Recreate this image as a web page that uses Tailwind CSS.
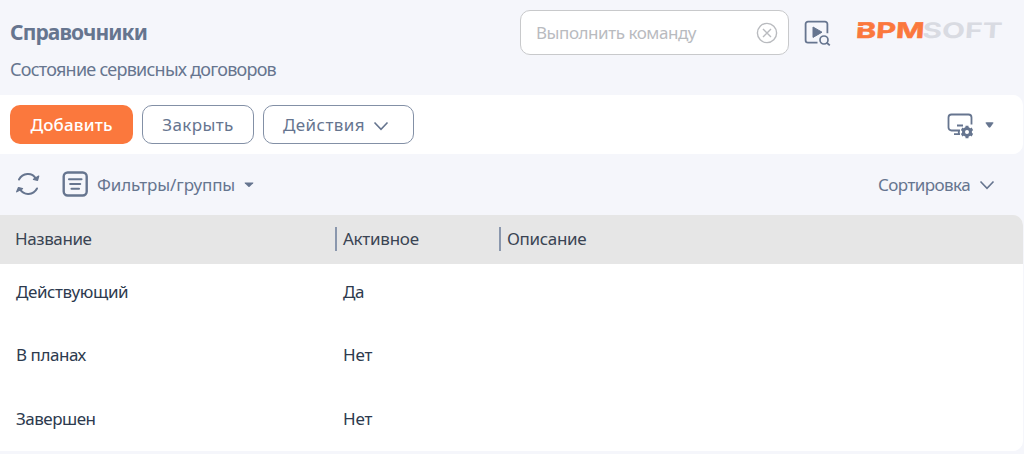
<!DOCTYPE html>
<html lang="ru">
<head>
<meta charset="utf-8">
<title>Справочники</title>
<script src="https://cdn.jsdelivr.net/npm/@tailwindcss/browser@4"></script>
</head>
<body class="h-[454px] w-[1024px] overflow-hidden bg-[#f5f6fb] font-['Noto_Sans',sans-serif] text-[17px] leading-6 whitespace-nowrap text-[#66758f]">
<header class="flex h-[95px] justify-between pl-[10px]">
  <div class="pt-[19px]">
    <h1 class="text-[21px] leading-[27px] font-bold tracking-[-0.9px]">Справочники</h1>
    <p class="mt-[11px] text-[18px] leading-[25px] tracking-[-0.76px]">Состояние сервисных договоров</p>
  </div>
  <div class="flex pt-[10px] pr-[12px]">
    <div class="flex h-[45px] w-[269px] items-center justify-between rounded-[10px] border border-[#c8c9cb] bg-white pr-[10px] pl-[15px] text-[#b9bbbf]">
      <span class="tracking-[-0.45px]">Выполнить команду</span>
      <svg class="size-[22px]" viewBox="0 0 22 22" fill="none" stroke="#b9bbbf" stroke-width="1.4"><circle cx="11" cy="11" r="9.6"/><path d="M7 7l8 8M15 7l-8 8"/></svg>
    </div>
    <svg class="mt-[9px] ml-[15px] h-[28px] w-[28px]" viewBox="0 0 28 28" fill="none" stroke="#66758f" stroke-width="1.8"><path d="M13.500 23.600H4a2.400 2.400 0 0 1-2.400-2.400V5A2.400 2.400 0 0 1 4 2.600h17a2.400 2.400 0 0 1 2.400 2.400v9.200"/><path d="M9 8v10.400L18 13.200Z" fill="#66758f" stroke-width="1" stroke-linejoin="round"/><circle cx="20" cy="21" r="4" stroke-width="1.700"/><path d="M22.800 23.800l3 2.600"/></svg>
    <svg class="mt-[4px] ml-[20px] h-[36px] w-[160px] overflow-visible" viewBox="-4 -5 160 36" font-family="Inter, sans-serif" font-size="21.500" font-weight="700">
      <g transform="translate(1 18.800) skewX(-4)">
      <text x="65" y="0" textLength="80" lengthAdjust="spacingAndGlyphs" fill="#d9dbe2">SOFT</text>
      <text x="-1.500" y="0" textLength="68.500" lengthAdjust="spacingAndGlyphs" fill="#fb783d" stroke="#fb783d" stroke-width=".5">BPM</text>
      </g>
      <path d="M0 7.600h8" stroke="#f5f6fb" stroke-width="1.200"/>
    </svg>
  </div>
</header>
<section class="flex h-[59px] w-[1023px] items-center rounded-r-[10px] bg-white pl-[10px]">
  <button class="h-[39px] w-[123px] rounded-[10px] bg-[#fb783d] font-medium tracking-[0.15px] text-white">Добавить</button>
  <button class="ml-[9px] h-[39px] w-[112px] rounded-[10px] border border-[#8390a6] tracking-[0.4px]">Закрыть</button>
  <button class="ml-[9px] flex h-[39px] w-[151px] items-center rounded-[10px] border border-[#8390a6] pl-[19px] tracking-[0.42px]">Действия
    <svg class="mt-[2px] ml-[8px] h-[10px] w-[16px]" viewBox="0 0 16 10" fill="none" stroke="#66758f" stroke-width="1.600"><path d="M1.500 1.500L8 8.300l6.500-6.800"/></svg>
  </button>
  <svg class="ml-[532px] h-[28px] w-[29px]" viewBox="0 0 29 28" fill="none" stroke="#66758f" stroke-width="1.800"><path d="M14 19.500H5.500a3 3 0 0 1-3-3V6.500a3 3 0 0 1 3-3h17a3 3 0 0 1 3 3v7M11 14.500h6M8 23.200h6M12.800 19.500v3.500"/><circle cx="21" cy="21" r="3.500" stroke-width="3"/><path d="M21 14.800v2.500m0 7.400v2.500M15.600 17.900l2.200 1.300m6.400 3.600l2.200 1.300M15.600 24.100l2.200-1.300m6.400-3.600l2.200-1.300" stroke-width="3"/></svg>
  <svg class="ml-[10px] h-[6px] w-[9px]" viewBox="0 0 9 6"><path d="M1.500 .2h6q1.600 0 .6 1.400L5.400 5.200q-.9.900-1.800 0L.9 1.600Q-.1.200 1.500.2Z" fill="#66758f"/></svg>
</section>
<section class="flex h-[61px] items-center pl-[15px]">
  <svg class="-mt-[1px] size-[26px]" viewBox="0 0 26 26" fill="none" stroke="#66758f" stroke-width="2" stroke-linecap="round"><path d="M4 8.500C7.500 1.800 17 .8 21 7.700M22 17.500C18.500 24.200 9 25 5 18.300"/><path d="M18.500 8.300l4 1 1.200-4.200ZM7.500 17.600l-4-1-1.800 4.200Z" fill="#66758f" stroke-width="1.300" stroke-linejoin="round"/></svg>
  <svg class="-mt-[1px] ml-[21px] size-[26px]" viewBox="0 0 26 26" fill="none" stroke="#66758f" stroke-width="2.400" stroke-linecap="round"><rect x="1.700" y="1.500" width="23" height="23" rx="4"/><path d="M7 8.200h12.500M8.200 13h10M9.500 17.800h7.500" stroke-width="2.100"/></svg>
  <span class="ml-[9px] tracking-[-0.1px]">Фильтры/группы</span>
  <svg class="ml-[9px] h-[6px] w-[10px]" viewBox="0 0 10 6"><path d="M1 .5h8q.8 0 .2.700L5.600 4.800q-.6.500-1.200 0L.8 1.200Q.2.500 1 .5Z" fill="#66758f"/></svg>
  <span class="ml-auto tracking-[-0.58px]">Сортировка</span>
  <svg class="mr-[29px] ml-[9px] h-[10px] w-[16px]" viewBox="0 0 16 10" fill="none" stroke="#66758f" stroke-width="1.600"><path d="M1.500 1.500L8 8.300l6.500-6.800"/></svg>
</section>
<main class="h-[236px] w-[1023px] overflow-hidden rounded-r-[10px] bg-white text-[#2d3a4e]">
  <div class="grid h-[49px] grid-cols-[335px_164px_1fr] items-center bg-[#e6e6e6] pb-px text-[#3a4453]">
    <div class="pl-[15px] tracking-[-0.4px]">Название</div>
    <div class="border-l-2 border-[#8a97ad] pl-[6px] tracking-[-0.25px]">Активное</div>
    <div class="border-l-2 border-[#8a97ad] pl-[6px] tracking-[-0.35px]">Описание</div>
  </div>
  <div class="grid h-[56px] grid-cols-[327px_1fr] items-center pl-[16px] tracking-[-0.4px]"><span>Действующий</span><span>Да</span></div>
  <div class="grid h-[70px] grid-cols-[327px_1fr] items-center pl-[16px]"><span class="tracking-[-0.45px]">В планах</span><span class="tracking-[-0.2px]">Нет</span></div>
  <div class="grid h-[57px] grid-cols-[327px_1fr] items-center pl-[16px]"><span class="tracking-[-0.52px]">Завершен</span><span class="tracking-[-0.2px]">Нет</span></div>
</main>
</body>
</html>
